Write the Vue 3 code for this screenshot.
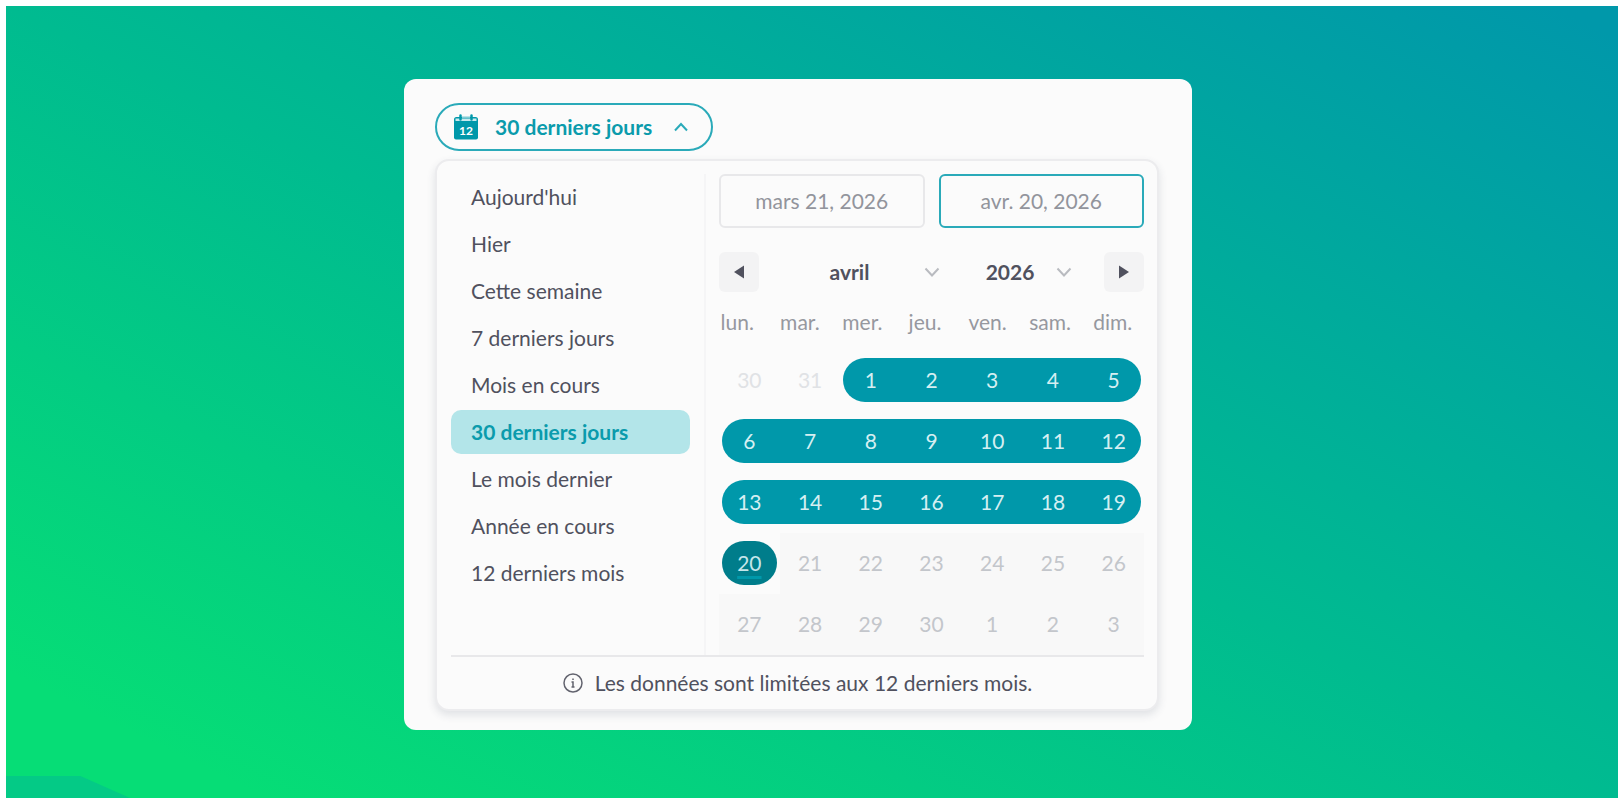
<template>
  <main class="stage">
    <div class="backdrop">
      <span class="corner-shape"></span>

      <section class="card">
        <!-- Trigger -->
        <button type="button" class="trigger" aria-expanded="true" aria-controls="range-panel">
          <svg class="calendar-icon" viewBox="0 0 24 26" aria-hidden="true">
            <path d="M2.500 3h19A2.500 2.500 0 0 1 24 5.500V8H0V5.500A2.500 2.500 0 0 1 2.500 3z" fill="#0098aa" />
            <path d="M1.500 4.500h21V7h-21z" fill="#c9eaee" />
            <path d="M8 2.500h8V4H8z" fill="#7fcbd4" />
            <path d="M0 8h24v15.500a2 2 0 0 1-2 2H2a2 2 0 0 1-2-2z" fill="#0098aa" />
            <path d="M6.500 1.500v4M17.500 1.500v4" stroke="#0098aa" stroke-width="2.500" stroke-linecap="round" />
            <text x="12" y="21" text-anchor="middle" class="calendar-number">12</text>
          </svg>
          <span class="trigger-label">{{ selectedPreset }}</span>
          <svg class="trigger-chevron" viewBox="0 0 16 16" aria-hidden="true">
            <path d="M2 11.500 8 5l6 6.500" />
          </svg>
        </button>

        <div id="range-panel" class="panel">
          <div class="panel-body">
            <ul class="presets">
              <li v-for="preset in presets" :key="preset">
                <button
                  type="button"
                  class="preset"
                  :class="{ selected: preset === selectedPreset }"
                  @click="selectedPreset = preset"
                >
                  {{ preset }}
                </button>
              </li>
            </ul>

            <div class="picker">
              <div class="date-inputs">
                <input v-model="startDate" type="text" class="date-input" aria-label="Date de début" />
                <input v-model="endDate" type="text" class="date-input active" aria-label="Date de fin" />
              </div>

              <div class="month-nav">
                <button type="button" class="nav-button" aria-label="Mois précédent">
                  <svg viewBox="0 0 12 14" aria-hidden="true"><path d="M11 .5v13L1 7z" /></svg>
                </button>
                <div class="select-box">
                  <select v-model="month" aria-label="Mois">
                    <option v-for="name in months" :key="name">{{ name }}</option>
                  </select>
                  <svg viewBox="0 0 16 16" aria-hidden="true"><path d="M1.500 4.500 8 11.500l6.500-7" /></svg>
                </div>
                <div class="select-box">
                  <select v-model="year" aria-label="Année">
                    <option>2025</option>
                    <option>2026</option>
                  </select>
                  <svg viewBox="0 0 16 16" aria-hidden="true"><path d="M1.500 4.500 8 11.500l6.500-7" /></svg>
                </div>
                <button type="button" class="nav-button next" aria-label="Mois suivant">
                  <svg viewBox="0 0 12 14" aria-hidden="true"><path d="M1 .5v13L11 7z" /></svg>
                </button>
              </div>

              <table class="calendar">
                <thead>
                  <tr>
                    <th v-for="day in weekdays" :key="day" scope="col">{{ day }}</th>
                  </tr>
                </thead>
                <tbody>
                  <tr v-for="(week, index) in weeks" :key="index">
                    <td v-for="day in week" :key="day.label" :class="day.state">
                      <button
                        type="button"
                        class="day"
                        :class="{ 'range-start': day.first, 'range-end': day.last }"
                        :disabled="day.state === 'disabled'"
                      >
                        {{ day.label }}
                      </button>
                    </td>
                  </tr>
                </tbody>
              </table>
            </div>
          </div>

          <p class="notice">
            <svg viewBox="0 0 20 20" aria-hidden="true">
              <circle cx="10" cy="10" r="9" />
              <path d="M8.500 9H10v5M8.500 14h3" />
              <path d="M10 5.500v1.500" />
            </svg>
            Les données sont limitées aux 12 derniers mois.
          </p>
        </div>
      </section>
    </div>
  </main>
</template>

<script setup>
import { ref } from 'vue';

const presets = [
  "Aujourd'hui",
  'Hier',
  'Cette semaine',
  '7 derniers jours',
  'Mois en cours',
  '30 derniers jours',
  'Le mois dernier',
  'Année en cours',
  '12 derniers mois'
];
const months = [
  'janvier', 'février', 'mars', 'avril', 'mai', 'juin',
  'juillet', 'août', 'septembre', 'octobre', 'novembre', 'décembre'
];
const weekdays = ['lun.', 'mar.', 'mer.', 'jeu.', 'ven.', 'sam.', 'dim.'];

const selectedPreset = ref('30 derniers jours');
const startDate = ref('mars 21, 2026');
const endDate = ref('avr. 20, 2026');
const month = ref('avril');
const year = ref('2026');

// Five weeks, starting on Monday 30 March
const weeks = Array.from({ length: 5 }, (_, row) =>
  Array.from({ length: 7 }, (_, col) => {
    const date = new Date(2026, 2, 30 + row * 7 + col);
    const label = date.getDate();
    const offset = row * 7 + col;
    let state = 'in-range';
    if (offset < 2) state = 'outside';
    else if (offset === 21) state = 'today';
    else if (offset > 21) state = 'disabled';

    return { label, state, first: col === 0 || offset === 2, last: col === 6 };
  })
);
</script>

<style>
body {
  margin: 0;
  background: #fff;
}
</style>

<style scoped>
.stage {
  box-sizing: border-box;
  display: flex;
  min-height: 100vh;
  padding: 6px;
  font-family: Lato, 'Open Sans', sans-serif;
  font-size: 21px;
  line-height: 28px;
  color: #50515e;
}

.backdrop {
  position: relative;
  flex: 1;
  display: flex;
  align-items: center;
  justify-content: center;
  padding: 12px 28px 8px 0;
  background: linear-gradient(to top right, #06dd76 8%, #00bb90 50%, #0098aa 98%);
}

.corner-shape {
  position: absolute;
  left: 0;
  bottom: 0;
  width: 124px;
  height: 22px;
  background: #04ca86;
  clip-path: polygon(0 0, 60% 0, 100% 100%, 0 100%);
}

button,
input,
select {
  font: inherit;
  color: inherit;
  margin: 0;
}

button {
  padding: 0;
  border: 0;
  background: none;
  cursor: pointer;
}

.card {
  box-sizing: border-box;
  width: 100%;
  max-width: 788px;
  padding: 24px 33px 19px 31px;
  border-radius: 12px;
  background: #fbfbfb;
}

.trigger {
  box-sizing: border-box;
  display: flex;
  align-items: center;
  width: 278px;
  height: 48px;
  padding: 0 22px 0 17px;
  border: 2px solid #2aaab9;
  border-radius: 24px;
  color: #0b9bac;
  font-weight: 700;
}

.calendar-icon {
  width: 24px;
  height: 26px;
}

.calendar-number {
  font-size: 12px;
  font-weight: 700;
  fill: #fff;
}

.trigger-label {
  flex: 1;
  padding-left: 17px;
  text-align: left;
}

.trigger-chevron {
  width: 16px;
  height: 16px;
  fill: none;
  stroke: #2aaab9;
  stroke-width: 2;
}

.panel {
  margin-top: 8px;
  padding: 13px 13px 12px 14px;
  border: 2px solid #ececee;
  border-radius: 14px;
  background: #fbfbfb;
  box-shadow: 0 4px 8px rgba(60, 70, 90, 0.14);
}

.panel-body {
  display: flex;
  border-bottom: 2px solid #e8e8ea;
}

.presets {
  flex: 1;
  display: flex;
  flex-direction: column;
  gap: 3px;
  margin: 0;
  padding: 1px 14px 0 0;
  border-right: 2px solid #f5f5f6;
  list-style: none;
}

.preset {
  width: 100%;
  height: 44px;
  padding: 0 20px;
  border-radius: 10px;
  text-align: left;
}

.preset.selected {
  background: #b3e5e9;
  color: #0b9bac;
  font-weight: 700;
}

.picker {
  width: 425px;
  padding-left: 13px;
}

.date-inputs {
  display: grid;
  grid-template-columns: 1fr 1fr;
  gap: 14px;
}

.date-input {
  box-sizing: border-box;
  width: 100%;
  height: 54px;
  border: 2px solid #e8e8ea;
  border-radius: 6px;
  background: #fbfbfb;
  color: #92949c;
  text-align: center;
}

.date-input.active {
  border-color: #2aaab9;
}

.month-nav {
  display: grid;
  grid-template-columns: 40px 1fr 124px 72px;
  align-items: center;
  margin-top: 24px;
}

.nav-button {
  display: flex;
  align-items: center;
  justify-content: center;
  width: 40px;
  height: 40px;
  border-radius: 6px;
  background: #f3f3f4;
}

.nav-button.next {
  justify-self: end;
}

.nav-button svg {
  width: 12px;
  height: 14px;
  fill: #50515e;
}

.select-box {
  position: relative;
  padding-right: 8px;
}

.select-box + .select-box {
  padding-right: 0;
}

.select-box select {
  width: 100%;
  height: 40px;
  padding: 0;
  border: 0;
  background: none;
  font-weight: 700;
  text-align: center;
  text-align-last: center;
  appearance: none;
}

.select-box svg {
  position: absolute;
  top: 12px;
  right: 8px;
  width: 16px;
  height: 16px;
  fill: none;
  stroke: #b9bbc0;
  stroke-width: 2;
  pointer-events: none;
}

.select-box + .select-box svg {
  right: 0;
}

.calendar,
.calendar thead,
.calendar tbody {
  display: block;
}

.calendar tr {
  display: grid;
  grid-template-columns: repeat(7, 1fr);
}

.calendar thead tr {
  margin-left: -13px;
  padding: 16px 0 14px;
}

.calendar th {
  padding: 0;
  color: #96989f;
  font-weight: 400;
  text-align: center;
}

.calendar td {
  display: flex;
  align-items: center;
  height: 61px;
  padding: 0;
}

.day {
  width: 100%;
  height: 44px;
}

.range-start {
  margin-left: 3px;
  padding-right: 3px;
  border-radius: 22px 0 0 22px;
}

.range-end {
  margin-right: 3px;
  padding-left: 3px;
  border-radius: 0 22px 22px 0;
}

.outside {
  color: #e0e2e5;
}

.in-range .day {
  background: #0098aa;
  color: #d5eff2;
}

.today .day {
  margin: 0 3px;
  padding: 0;
  border-radius: 22px;
  background: #007d8b;
  color: #c5e6ea;
  text-decoration: underline 3px #0098aa;
  text-underline-offset: 5px;
}

.disabled {
  background: #f8f8f8;
  color: #c3c6cb;
}

.notice {
  display: flex;
  align-items: center;
  justify-content: center;
  gap: 12px;
  margin: 0;
  padding-top: 12px;
}

.notice svg {
  width: 20px;
  height: 20px;
  fill: none;
  stroke: #62636e;
  stroke-width: 1.500;
}
</style>
